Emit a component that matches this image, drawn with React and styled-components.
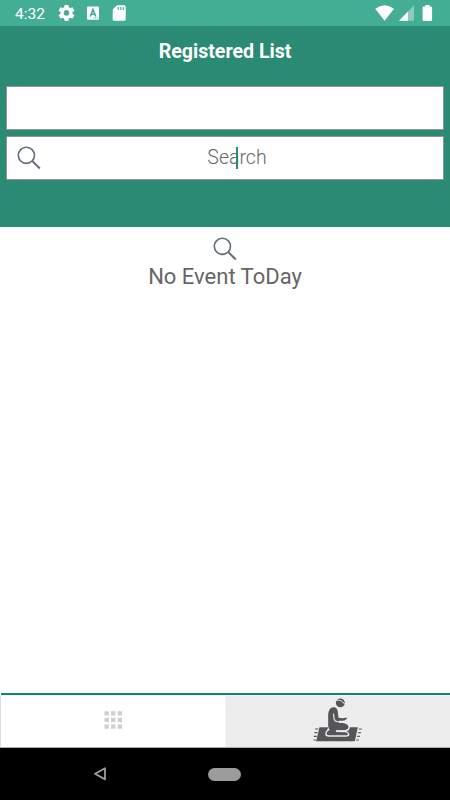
import React from "react";
import styled, { createGlobalStyle } from "styled-components";

const colors = {
    status: "#43ae94",
    primary: "#2a8a73",
    line: "#078a70",
    icon: "#626b7b",
    person: "#55565a",
};

export default function App() {
    return (
        <Screen>
            <GlobalStyle />
            <StatusBar>
                <Clock>4:32</Clock>
                <StatusIcons />
                <SignalIcons />
            </StatusBar>
            <Header>
                <Title>Registered List</Title>
                <Field />
                <Field>
                    <SearchIcon />
                    <Placeholder>Search<Caret /></Placeholder>
                </Field>
            </Header>
            <Content>
                <SearchIcon />
                <EmptyText>No Event ToDay</EmptyText>
            </Content>
            <TabLine />
            <TabBar>
                <Tab>
                    <GridIcon />
                </Tab>
                <Tab $active>
                    <PrayerIcon />
                </Tab>
            </TabBar>
            <NavBar>
                <BackIcon />
                <HomePill />
            </NavBar>
        </Screen>
    )
}

function StatusIcons() {
    return (
        <svg width="70" height="18" viewBox="57 4 70 18" fill="white">
            <path transform="translate(56.9 3.3) scale(.8)" d="M19.43 12.98c.04-.32.07-.64.07-.98s-.03-.66-.07-.98l2.11-1.65c.19-.15.24-.42.12-.64l-2-3.46c-.12-.22-.39-.3-.61-.22l-2.49 1c-.52-.4-1.08-.73-1.69-.98l-.38-2.65C14.46 2.18 14.25 2 14 2h-4c-.25 0-.46.18-.49.42l-.38 2.65c-.61.25-1.17.59-1.69.98l-2.49-1c-.23-.09-.49 0-.61.22l-2 3.46c-.13.22-.07.49.12.64l2.11 1.65c-.04.32-.07.65-.07.98s.03.66.07.98l-2.11 1.65c-.19.15-.24.42-.12.64l2 3.46c.12.22.39.3.61.22l2.49-1c.52.4 1.08.73 1.69.98l.38 2.65c.03.24.24.42.49.42h4c.25 0 .46-.18.49-.42l.38-2.65c.61-.25 1.17-.59 1.69-.98l2.49 1c.23.09.49 0 .61-.22l2-3.46c.12-.22.07-.49-.12-.64l-2.11-1.65zM12 15.5c-1.93 0-3.5-1.57-3.5-3.5s1.57-3.5 3.5-3.5 3.5 1.57 3.5 3.5-1.57 3.5-3.5 3.5z" />
            <rect x="87" y="6.6" width="12" height="13.2" rx="1" />
            <path d="M90.2 16.5L93 9.5L95.8 16.5M91.2 14.2H94.8" fill="none" stroke={colors.status} strokeWidth="1.6" />
            <path d="M93.5 18h4.5" stroke={colors.status} strokeWidth="1" strokeDasharray="1 .7" />
            <path d="M117 5.2H124.2Q125.7 5.2 125.7 6.7V19.4Q125.7 20.8 124.2 20.8H114.2Q112.7 20.8 112.7 19.4V9.5Z" />
            <path d="M118.2 7V10M120.8 7V10M123.4 7V10" stroke={colors.status} strokeWidth="1.2" />
        </svg>
    )
}

function SignalIcons() {
    return (
        <Signals width="60" height="18" viewBox="374 4 60 18" fill="white">
            <path d="M375.2 8.8Q384.6 1.8 394 8.8L384.6 20.8Z" />
            <path d="M414 5.6V20.8H399Z" opacity=".38" />
            <path d="M408 11.6V20.8H399Z" />
            <path d="M425.3 5.1H429.5V6.5H431Q432.1 6.5 432.1 7.6V19.8Q432.1 20.9 431 20.9H423.7Q422.6 20.9 422.6 19.8V7.6Q422.6 6.5 423.7 6.5H425.3Z" />
        </Signals>
    )
}

function SearchIcon() {
    return (
        <svg width="24" height="24" viewBox="0 0 24 24" fill="none" stroke={colors.icon}>
            <circle cx="9.4" cy="9.3" r="8.1" strokeWidth="1.6" />
            <path d="M15.3 15.1L22.8 22.5" strokeWidth="2" />
        </svg>
    )
}

function GridIcon() {
    return (
        <svg width="18" height="22" viewBox="0 0 18 22" fill="#cfcfcf">
            {[0, 6.6, 13.2].map((y) =>
                [0, 6.6, 13.2].map((x) => (
                    <rect key={`${x}-${y}`} x={x + 0.5} y={y + 0.2} width="4.3" height="4.3" />
                ))
            )}
        </svg>
    )
}

function PrayerIcon() {
    return (
        <svg width="52" height="52" viewBox="1.5 0 156 156" fill={colors.person}>
            <path d="M24 94H139L130 136H14Z" />
            {/* fringe on both ends of the rug */}
            <path d="M11 99H21M9 110H18M7 121H16M6 132H13M142 99H151M140 110H148M137 121H145M134 132H142" stroke={colors.person} strokeWidth="3.5" />
            {/* halo that lifts the figure off the rug */}
            <path d="M49 80V98Q40 107 41 117Q43 122 52 122H104Q114 122 114 115Q113 109 105 106Q116 102 115 92Q112 83 100 78Z" fill="#ededed" />
            <path d="M66 34C54 34 50 48 50 60V91Q50 98 55 101Q45 106 45 113Q46 118 53 118H102Q110 118 109 113Q107 109 99 109L74 108V103H95Q111 102 111 92C110 83 98 81 82 80V74H94Q99 74 105 68L102 65L94 67L81 65L79 48C78 38 73 33 66 34Z" />
            <path d="M66 54L68 69Q69 76 77 77L94 78" fill="none" stroke="#ededed" strokeWidth="3.5" strokeLinecap="round" />
            <path d="M97 72L106 66" fill="none" stroke={colors.person} strokeWidth="3.5" />
            <path d="M73 105H99" fill="none" stroke="#ededed" strokeWidth="3" />
            <ellipse cx="86.5" cy="20.5" rx="13.5" ry="13" />
            <path d="M73 13Q89 9 99 24" fill="none" stroke="#ededed" strokeWidth="3" />
        </svg>
    )
}

function BackIcon() {
    return (
        <Back width="14" height="16" viewBox="0 0 14 16">
            <path d="M12 2.2V13.4L2 7.8Z" fill="none" stroke="#9c9c9c" strokeWidth="1.8" strokeLinejoin="round" />
        </Back>
    )
}

const GlobalStyle = createGlobalStyle`
    * {
        box-sizing: border-box;
    }

    body {
        margin: 0;
        font-family: Roboto, "Liberation Sans", sans-serif;
    }

    svg {
        display: block;
        flex-shrink: 0;
    }
`

const Screen = styled.div`
    width: 450px;
    height: 800px;
    display: flex;
    flex-direction: column;
    background: white;
    overflow: hidden;
`

const StatusBar = styled.div`
    height: 26px;
    padding: 4px 16px 4px 15px;
    display: flex;
    background: ${colors.status};
`

const Clock = styled.span`
    width: 42px;
    font-size: 15.5px;
    line-height: 20px;
    color: white;
`

const Signals = styled.svg`
    margin-left: auto;
`

const Header = styled.div`
    height: 201px;
    padding: 0 6px;
    display: flex;
    flex-direction: column;
    gap: 6px;
    background: ${colors.primary};
`

const Title = styled.h1`
    margin: 0;
    height: 54px;
    font-size: 19.6px;
    font-weight: 700;
    line-height: 51px;
    color: white;
    text-align: center;
`

const Field = styled.div`
    height: 44px;
    display: flex;
    align-items: center;
    padding: 0 10px;
    border: 1px solid #969393;
    border-radius: 1px;
    background: white;
`

const Placeholder = styled.span`
    position: relative;
    flex: 1;
    padding-bottom: 1px;
    font-size: 19.5px;
    font-weight: 300;
    line-height: 23px;
    color: #686868;
    text-align: center;
`

const Caret = styled.span`
    position: absolute;
    left: 195px;
    top: 1px;
    width: 2px;
    height: 22px;
    background: ${colors.primary};
`

const Content = styled.div`
    flex: 1;
    padding-top: 10px;
    display: flex;
    flex-direction: column;
    align-items: center;
`

const EmptyText = styled.p`
    margin: 3px 0 0;
    font-size: 22px;
    line-height: 26px;
    color: #666;
`

const TabLine = styled.div`
    height: 2px;
    margin-left: 1px;
    background: ${colors.line};
`

const TabBar = styled.div`
    height: 53px;
    display: flex;
    border-bottom: 1px solid #aaadad;
`

const Tab = styled.div`
    flex: 1;
    display: flex;
    align-items: center;
    justify-content: center;
    border-top: 1px solid white;
    border-left: 1px solid ${props => props.$active ? "#f3f3f3" : "#dedede"};
    background: ${props => props.$active ? "#ededed" : "white"};
`

const NavBar = styled.div`
    height: 52px;
    display: flex;
    align-items: center;
    background: black;
`

const Back = styled.svg`
    margin-left: 93px;
`

const HomePill = styled.div`
    width: 33px;
    height: 13px;
    margin-left: 101px;
    border-radius: 7px;
    background: #9c9c9c;
`
